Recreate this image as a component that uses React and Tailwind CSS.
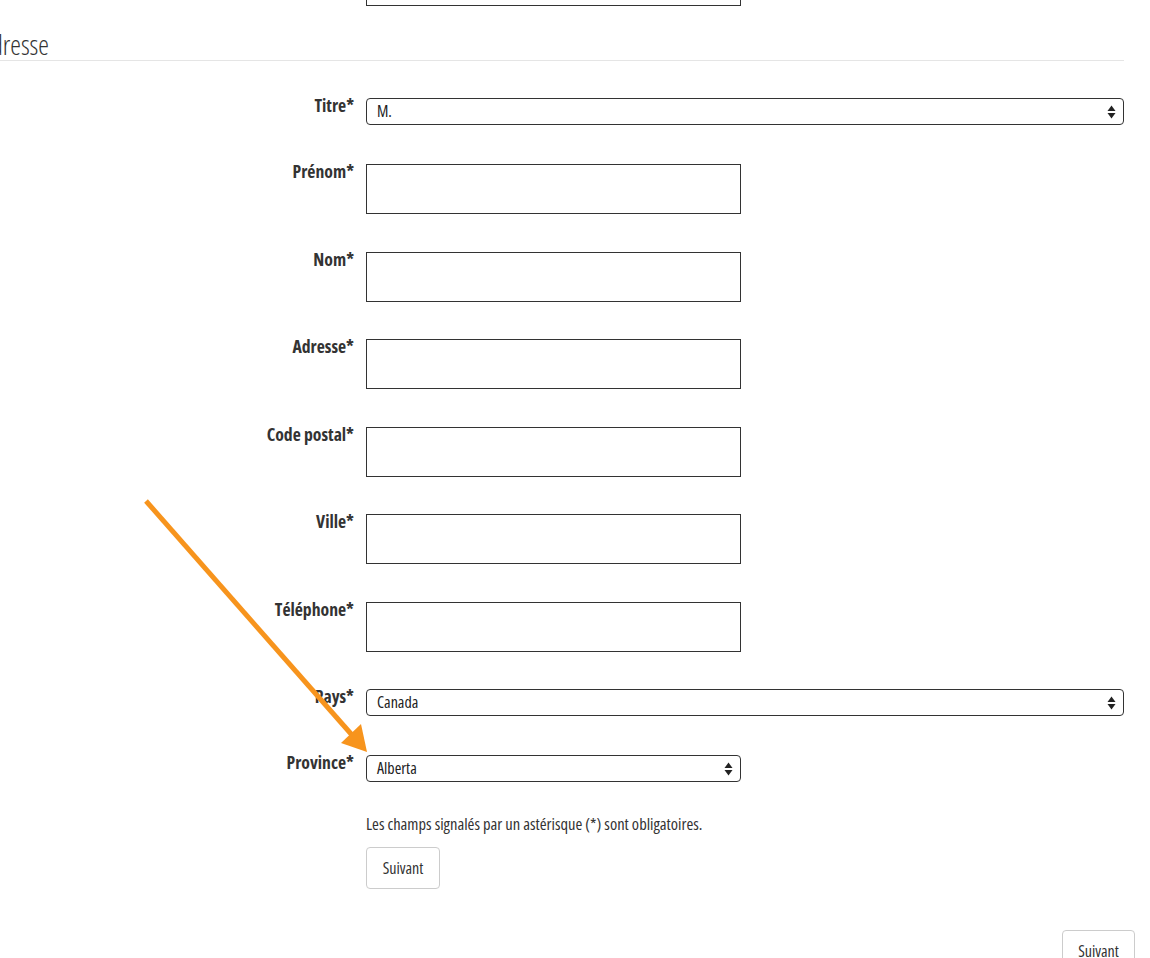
import React from 'react'

const rows = [
  { label: 'Titre*', type: 'select', value: 'M.', wide: true },
  { label: 'Prénom*', type: 'input' },
  { label: 'Nom*', type: 'input' },
  { label: 'Adresse*', type: 'input' },
  { label: 'Code postal*', type: 'input' },
  { label: 'Ville*', type: 'input' },
  { label: 'Téléphone*', type: 'input' },
  { label: 'Pays*', type: 'select', value: 'Canada', wide: true },
  { label: 'Province*', type: 'select', value: 'Alberta' },
]

function UpDown() {
  return (
    <svg width="9" height="14" viewBox="0 0 9 14" className="absolute right-[7px] top-1/2 -translate-y-1/2">
      <path d="M4.5 0.5 L8.5 6 L0.5 6 Z" fill="#222" />
      <path d="M0.5 8 L8.5 8 L4.5 13.5 Z" fill="#222" />
    </svg>
  )
}

function Field({ row }) {
  if (row.type === 'select') {
    return (
      <div className={`relative h-[27px] rounded-[4px] border border-[#333] bg-white ${row.wide ? 'w-[758px]' : 'w-[375px]'}`}>
        <div className="pl-[10px] text-[16px] font-normal leading-[25px] text-[#222]">{row.value}</div>
        <UpDown />
      </div>
    )
  }
  return <div className="h-[50px] w-[375px] border border-[#333] bg-white" />
}

export default function App() {
  return (
    <div className="relative h-[958px] overflow-hidden bg-white text-[#333] font-['Open_Sans','Liberation_Sans_Narrow',sans-serif] [font-stretch:75%]">
      {/* bottom of the previous field */}
      <div className="ml-[366px] h-[6px] w-[375px] border-x border-b border-[#333]" />

      <div className="mr-[26px] mt-[25px] border-b border-[#e5e5e5] pb-[2px]">
        <h2 className="-ml-[20px] text-[27px] font-light leading-[27px] text-[#333]">Adresse</h2>
      </div>

      <div className="pt-[37px]">
        {rows.map(row => (
          <div key={row.label} className={`flex items-start ${row.type === 'select' ? 'mb-[39px]' : 'mb-[37.5px]'}`}>
            <label className="-mt-[2px] w-[354px] text-right text-[17.7px] font-bold leading-[18px] text-[#333]">{row.label}</label>
            <div className="ml-[12px]">
              <Field row={row} />
            </div>
          </div>
        ))}

        <div className="-mt-[7px] ml-[366px]">
          <p className="text-[16.5px] font-normal leading-[20px] text-[#333]">Les champs signalés par un astérisque (*) sont obligatoires.</p>
          <button className="mt-[13px] h-[42px] w-[74px] rounded-[4px] border border-[#ccc] bg-white text-[16px] font-normal text-[#333]">Suivant</button>
        </div>

        <div className="mr-[15px] mt-[41px] flex justify-end">
          <button className="h-[42px] w-[73px] rounded-[4px] border border-[#ccc] bg-white text-[16px] font-normal text-[#333]">Suivant</button>
        </div>
      </div>

      {/* annotation arrow */}
      <svg className="pointer-events-none absolute left-0 top-0" width="1150" height="958">
        <line x1="146" y1="501" x2="352" y2="735" stroke="#f7941d" strokeWidth="5" strokeLinecap="butt" />
        <path d="M367 752 L341 743 L361 724 Z" fill="#f7941d" />
      </svg>
    </div>
  )
}
